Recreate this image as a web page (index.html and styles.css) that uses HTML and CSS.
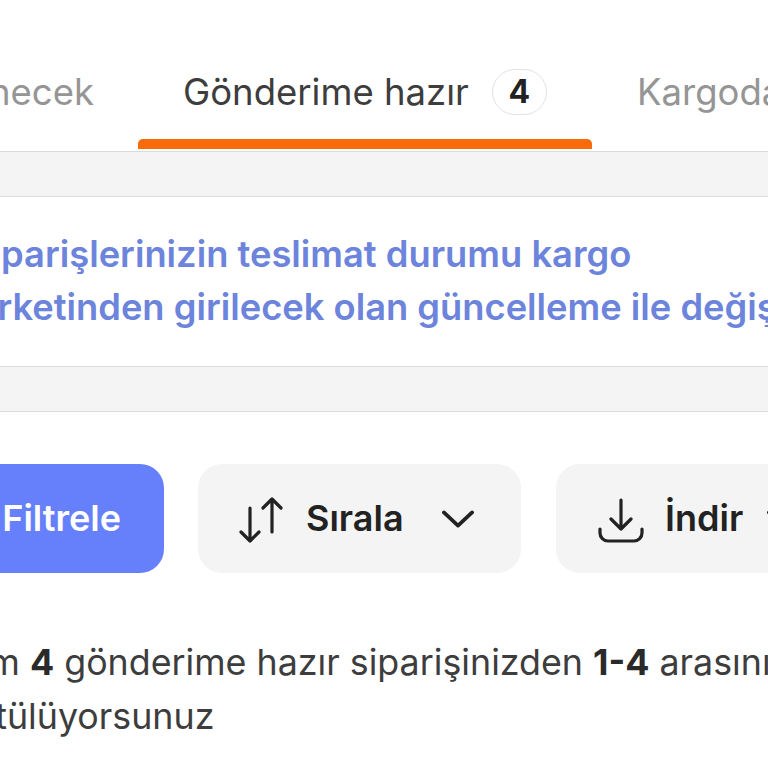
FILE: index.html
```html
<!DOCTYPE html>
<html lang="tr">
<head>
    <meta charset="UTF-8">
    <title>Gönderime hazır</title>
    <link rel="stylesheet" href="styles.css">
</head>
<body>
    <nav class="tabs">
        <div class="tab tab-prev">İşlenecek</div>
        <div class="tab tab-active">
            <span>Gönderime hazır</span>
            <span class="count">4</span>
        </div>
        <div class="tab">Kargoda</div>
    </nav>

    <div class="strip"></div>

    <div class="notice">
        Siparişlerinizin teslimat durumu kargo<br>
        şirketinden girilecek olan güncelleme ile değişir
    </div>

    <div class="strip"></div>

    <div class="actions">
        <button class="btn btn-primary">Filtrele</button>
        <button class="btn btn-sort">
            <svg class="icon" viewBox="0 0 46 46" fill="none" stroke="#222" stroke-width="3.2" stroke-linecap="round" stroke-linejoin="round">
                <path d="M11 11v33M2 35l9 9 9-9"/>
                <path d="M33 35V2M24 11l9-9 9 9"/>
            </svg>
            <span>Sırala</span>
            <svg class="icon-chevron" viewBox="0 0 34 20" fill="none" stroke="#222" stroke-width="4" stroke-linecap="round" stroke-linejoin="round">
                <path d="M2 3l15 14L32 3"/>
            </svg>
        </button>
        <button class="btn btn-download">
            <svg class="icon" viewBox="0 0 46 46" fill="none" stroke="#222" stroke-width="3.2" stroke-linecap="round" stroke-linejoin="round">
                <path d="M23 3v29M13 22l10 10 10-10"/>
                <path d="M2 32v4a8 8 0 0 0 8 8h26a8 8 0 0 0 8-8v-4"/>
            </svg>
            <span>İndir</span>
            <svg class="icon-chevron" viewBox="0 0 34 20" fill="none" stroke="#222" stroke-width="4" stroke-linecap="round" stroke-linejoin="round">
                <path d="M2 3l15 14L32 3"/>
            </svg>
        </button>
    </div>

    <p class="summary">
        Toplam <b>4</b> gönderime hazır siparişinizden <b>1-4</b> arasını<br>
        görüntülüyorsunuz
    </p>
</body>
</html>
```

FILE: styles.css
```css
html, body {
    margin: 0;
    height: 768px;
    overflow: hidden;
    background: #fff;
}
body {
    font-family: Inter, "Liberation Sans", sans-serif;
    color: #333;
}
.tabs {
    display: flex;
    height: 151px;
    margin-left: -137px;
    white-space: nowrap;
}
.tab {
    position: relative;
    box-sizing: border-box;
    flex: none;
    height: 151px;
    padding: 70px 45px 0;
    font-size: 36.5px;
    line-height: 44px;
    color: #959595;
}
.tab-prev {
    width: 276px;
    text-align: right;
}
.tab-active {
    display: flex;
    align-items: flex-start;
    gap: 23px;
    width: 453px;
    padding-left: 44px;
    color: #3d3d3d;
}
.tab-active::after {
    content: "";
    position: absolute;
    left: -1px;
    right: 0;
    bottom: 2px;
    height: 10px;
    border-radius: 5px 5px 0 0;
    background: #f96a0b;
}
.count {
    width: 56px;
    height: 46px;
    box-sizing: border-box;
    margin-top: -1px;
    border: 1px solid #e2e2e2;
    border-radius: 23px;
    text-align: center;
    font-size: 32px;
    font-weight: 700;
    line-height: 44px;
    color: #222;
}
.strip {
    box-sizing: border-box;
    height: 46px;
    background: #f4f4f5;
    border-top: 1px solid #dcdcdc;
    border-bottom: 1px solid #dcdcdc;
}
.notice {
    height: 169px;
    box-sizing: border-box;
    padding-top: 31px;
    margin-left: -32px;
    white-space: nowrap;
    font-size: 36.3px;
    font-weight: 600;
    line-height: 53px;
    color: #6c84dc;
}
.actions {
    display: flex;
    gap: 34px;
    margin: 52px 0 0 -200px;
    height: 109px;
}
.btn {
    flex: none;
    display: flex;
    align-items: center;
    border: 0;
    border-radius: 24px;
    background: #f4f4f4;
    font-family: inherit;
    font-size: 36px;
    font-weight: 600;
    line-height: 105px;
    color: #222;
    padding: 0;
}
.btn-primary {
    width: 364px;
    background: #6680fb;
    color: #fff;
    justify-content: flex-end;
    padding-right: 43px;
}
.btn-sort {
    width: 323px;
    padding-left: 41px;
}
.icon {
    flex: none;
    width: 46px;
    height: 46px;
    margin: 2px 21px 0 0;
}
.icon-chevron {
    flex: none;
    width: 32px;
    height: 20px;
    margin-left: 38px;
}
.btn-download {
    width: 300px;
    margin-left: 1px;
    padding-left: 42px;
}
.btn-download .icon-chevron {
    margin-left: 24px;
}
.summary {
    margin: 62px 0 0 -104px;
    white-space: nowrap;
    font-size: 35.8px;
    line-height: 54px;
    color: #3d3d3d;
}
.summary b {
    font-weight: 700;
    color: #2a2a2a;
}
```
